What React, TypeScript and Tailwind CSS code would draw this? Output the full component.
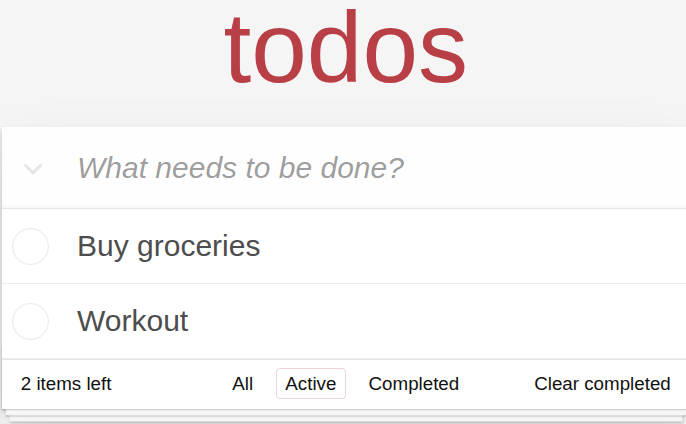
export default function App() {
  const items = ["Buy groceries", "Workout"];
  return (
    <div className="h-[424px] w-full overflow-hidden bg-[#f5f5f5] font-['Liberation_Sans',Arial,Helvetica,sans-serif] text-[#111111]">
      <div className="ml-[2px] w-[687.5px]">
        <h1 className="mb-[33px] h-[94px] text-center text-[100px] font-normal leading-[94px] text-[#b83f45]">
          todos
        </h1>
        <section className="relative bg-white shadow-[0_2.5px_5px_0_rgba(0,0,0,0.2),0_31.25px_62.5px_0_rgba(0,0,0,0.1)]">
          <div className="flex h-[81px] items-center bg-[rgba(0,0,0,0.003)] shadow-[inset_0_-2.5px_1.25px_rgba(0,0,0,0.03)]">
            <div className="flex w-[75px] shrink-0 pl-[21px] pt-[3px]">
              <svg width="20" height="12" viewBox="0 0 20 12" fill="none">
                <path d="M1.5 1.5 L10 10 L18.5 1.5" stroke="#e6e6e6" strokeWidth="3" />
              </svg>
            </div>
            <span className="text-[30px] italic leading-[42px] text-black/40">What needs to be done?</span>
          </div>
          <ul className="border-t border-[#e6e6e6]">
            {items.map((t) => (
              <li key={t} className="flex h-[75px] items-center border-b border-[#ededed]">
                <div className="flex w-[75px] shrink-0 pl-[10px]">
                  <svg width="37" height="37" viewBox="0 0 37 37" fill="none">
                    <circle cx="18.5" cy="18.5" r="17.9" stroke="#ededed" strokeWidth="1.25" />
                  </svg>
                </div>
                <span className="text-[30px] leading-[36px] text-[#4d4d4d]">{t}</span>
              </li>
            ))}
          </ul>
          <footer className="relative grid h-[50px] grid-cols-[1fr_auto_1fr] items-center border-t border-[#e6e6e6] px-[18.75px] pb-[2px] text-[18.75px]">
            <div className="pointer-events-none absolute inset-x-0 bottom-0 h-[62.5px] shadow-[0_1.25px_1.25px_rgba(0,0,0,0.2),0_10px_0_-3.75px_#f6f6f6,0_11.25px_1.25px_-3.75px_rgba(0,0,0,0.2),0_20px_0_-7.5px_#f6f6f6,0_21.25px_2.5px_-7.5px_rgba(0,0,0,0.2)]" />
            <span className="relative leading-[24px]">2 items left</span>
            <ul className="relative flex gap-[5.2px]">
              {["All", "Active", "Completed"].map((f) => (
                <li key={f}>
                  <a
                    className={
                      f === "Active"
                        ? "m-[3.75px] block rounded-[3.75px] border-[1.25px] border-[rgba(175,47,47,0.2)] px-[8.75px] py-[3.75px] leading-[21px]"
                        : "m-[3.75px] block rounded-[3.75px] border-[1.25px] border-transparent px-[8.75px] py-[3.75px] leading-[21px]"
                    }
                  >
                    {f}
                  </a>
                </li>
              ))}
            </ul>
            <span className="relative justify-self-end leading-[24px]">Clear completed</span>
          </footer>
        </section>
      </div>
    </div>
  );
}
